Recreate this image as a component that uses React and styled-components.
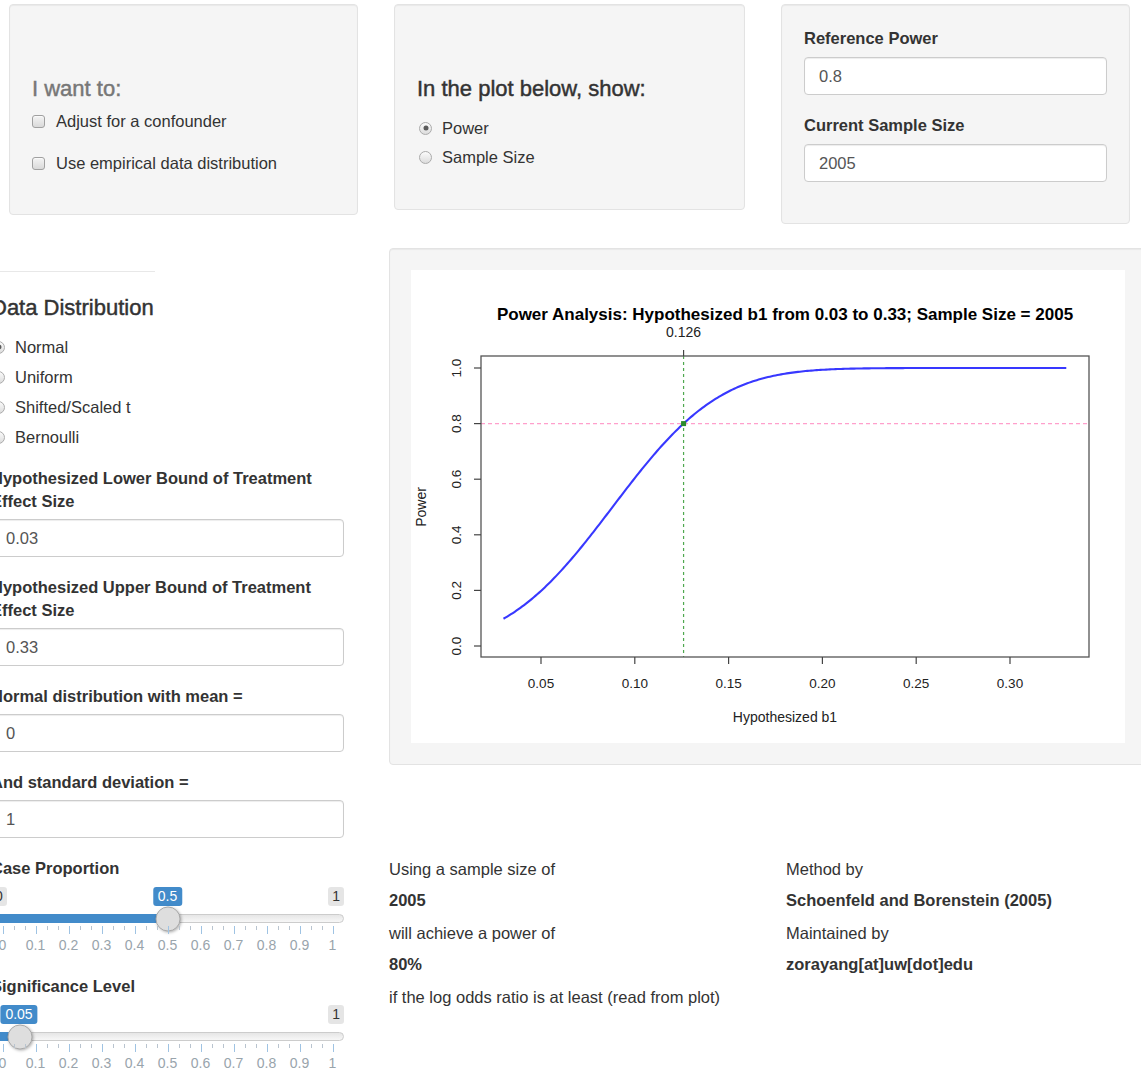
import React from "react";
import styled, { createGlobalStyle } from "styled-components";

const GlobalStyle = createGlobalStyle`
  html, body {
    margin: 0;
    padding: 0;
    background: #fff;
  }
  body {
    font-family: "Liberation Sans", Arial, Helvetica, sans-serif;
    font-size: 16.5px;
    color: #333;
    overflow: hidden;
  }
  * { box-sizing: border-box; }
`;

const Page = styled.div`
  width: 1141px;
  height: 1074px;
  overflow: hidden;
`;

/* ---------- top control wells ---------- */

const TopRow = styled.div`
  display: flex;
  align-items: flex-start;
  gap: 36px;
  padding: 4px 0 0 9px;
`;

const Well = styled.div`
  flex: none;
  width: ${(p) => p.$w}px;
  background: #f5f5f5;
  border: 1px solid #e3e3e3;
  border-radius: 4px;
  box-shadow: inset 0 1px 1px rgba(0, 0, 0, 0.05);
  padding: ${(p) => p.$pad || "22px"};
`;

/* medium-weight section heading */
const Heading = styled.h4`
  margin: ${(p) => p.$mt || 0}px 0 0;
  font-size: 22px;
  line-height: 23px;
  font-weight: 400;
  -webkit-text-stroke: 0.45px currentColor;
  color: ${(p) => (p.$muted ? "#777" : "#333")};
`;

const OptionList = styled.div`
  display: flex;
  flex-direction: column;
  gap: ${(p) => p.$gap}px;
  margin-top: ${(p) => p.$mt || 0}px;
  margin-bottom: ${(p) => p.$mb || 0}px;
`;

const OptionRow = styled.label`
  display: flex;
  align-items: center;
  height: 20px;
  line-height: 20px;
  font-size: 16.5px;
  color: #333;
  padding-left: ${(p) => p.$indent || 0}px;
`;

const CheckMark = styled.span`
  flex: none;
  width: 13px;
  height: 13px;
  border: 1px solid #a0a0a0;
  border-radius: 3px;
  background: linear-gradient(to bottom, #f4f4f4, #d9d9d9);
  box-shadow: inset 0 1px 1px rgba(255, 255, 255, 0.6);
  margin-right: 11px;
`;

const RadioMark = styled.span`
  flex: none;
  position: relative;
  width: 13px;
  height: 13px;
  border: 1px solid #ababab;
  border-radius: 50%;
  background: linear-gradient(to bottom, #fbfbfb, #dcdcdc);
  margin-right: 10px;

  &::after {
    content: "";
    display: ${(p) => (p.$on ? "block" : "none")};
    position: absolute;
    left: 50%;
    top: 50%;
    width: 5px;
    height: 5px;
    border-radius: 50%;
    background: #5a5a5a;
    transform: translate(-50%, -50%);
  }
`;

const FieldLabel = styled.div`
  margin-top: ${(p) => p.$mt || 0}px;
  font-weight: 700;
  font-size: 16.5px;
  line-height: ${(p) => p.$lh || 23}px;
  color: #333;
`;

const TextInput = styled.div`
  margin-top: ${(p) => p.$mt}px;
  margin-bottom: ${(p) => p.$mb || 0}px;
  height: 38px;
  display: flex;
  align-items: center;
  padding: 0 14px;
  background: #fff;
  border: 1px solid #ccc;
  border-radius: 4px;
  box-shadow: inset 0 1px 1px rgba(0, 0, 0, 0.075);
  font-size: 16.5px;
  color: #555;
`;

/* ---------- lower layout ---------- */

const BodyRow = styled.div`
  display: flex;
  align-items: flex-start;
  gap: 45px;
  margin-top: 24px;
`;

const Sidebar = styled.aside`
  flex: none;
  width: 353px;
  margin-left: -9px;
  padding-top: 23px;
`;

const Rule = styled.hr`
  width: 164px;
  margin: 0;
  border: 0;
  border-top: 1px solid #e8e8e8;
`;

const Field = styled.div`
  margin-top: ${(p) => p.$mt || 0}px;
`;

const MainColumn = styled.main`
  flex: none;
  width: 758px;
`;

const PlotWell = styled.div`
  background: #f5f5f5;
  border: 1px solid #e3e3e3;
  border-radius: 4px;
  box-shadow: inset 0 1px 1px rgba(0, 0, 0, 0.05);
  padding: 21px;
`;

const PlotFrame = styled.div`
  width: 714px;
  height: 473px;
  background: #fff;

  svg {
    display: block;
    font-family: "Liberation Sans", Arial, Helvetica, sans-serif;
  }
`;

const InfoGrid = styled.div`
  display: grid;
  grid-template-columns: 397px 1fr;
  margin-top: 94px;
`;

const InfoLine = styled.div`
  font-size: 16.5px;
  line-height: 20px;
  color: #333;
  font-weight: ${(p) => (p.$strong ? 700 : 400)};
  margin-bottom: ${(p) => (p.$strong ? 13 : 11)}px;
`;

/* ---------- range slider ---------- */

const SliderBox = styled.div`
  position: relative;
  height: 66px;
  margin-top: ${(p) => p.$mt}px;
`;

const EdgeRow = styled.div`
  display: flex;
  justify-content: space-between;
  height: 19px;
`;

const EdgeTag = styled.span`
  font-size: 14px;
  line-height: 17px;
  padding: 1px 4px;
  border-radius: 3px;
  background: rgba(0, 0, 0, 0.1);
  color: #333;
  visibility: ${(p) => (p.$hidden ? "hidden" : "visible")};
`;

const ValueTag = styled.span`
  position: absolute;
  top: 0;
  transform: translateX(-50%);
  font-size: 14px;
  line-height: 17px;
  padding: 1px 5px;
  border-radius: 3px;
  background: #428bca;
  color: #fff;
  white-space: nowrap;
`;

const Track = styled.div`
  position: relative;
  margin-top: 8px;
  height: 9px;
  border: 1px solid #ccc;
  border-radius: 16px;
  background: linear-gradient(to bottom, #dedede -50%, #fff 150%);
`;

const TrackFill = styled.div`
  position: absolute;
  left: -1px;
  top: -1px;
  height: 9px;
  background: #428bca;
  border-radius: 16px 0 0 16px;
`;

const Handle = styled.div`
  position: absolute;
  top: 50%;
  width: 25px;
  height: 25px;
  border-radius: 50%;
  transform: translate(-50%, -50%);
  background: #dedede;
  border: 1px solid #aaa;
  box-shadow: 1px 1px 3px rgba(0, 0, 0, 0.3);
`;

const Grid = styled.div`
  position: relative;
  height: 27px;
  margin: 2.5px 11.5px 0;
`;

const Tick = styled.span`
  position: absolute;
  top: 0;
  width: 1px;
  height: ${(p) => (p.$small ? 4 : 8)}px;
  background: ${(p) => (p.$small ? "#b9c4cf" : "#9fc3e3")};
`;

const GridText = styled.span`
  position: absolute;
  top: 11px;
  transform: translateX(-50%);
  font-size: 14px;
  line-height: 16px;
  color: #99a4ac;
`;

const at = (v) => `calc(11.5px + ${v} * (100% - 23px))`;

function RangeSlider({ value, label, mt, hideMin }) {
  const majors = Array.from({ length: 11 }, (_, i) => i / 10);
  const minors = [];
  for (let i = 0; i < 10; i++) {
    minors.push(i / 10 + 1 / 30, i / 10 + 2 / 30);
  }
  return (
    <SliderBox $mt={mt}>
      <EdgeRow>
        <EdgeTag $hidden={hideMin}>0</EdgeTag>
        <EdgeTag>1</EdgeTag>
      </EdgeRow>
      <ValueTag style={{ left: at(value) }}>{label}</ValueTag>
      <Track>
        <TrackFill style={{ width: at(value) }} />
        <Handle style={{ left: at(value) }} />
      </Track>
      <Grid>
        {minors.map((v) => (
          <Tick key={`s${v}`} $small style={{ left: `${v * 100}%` }} />
        ))}
        {majors.map((v) => (
          <Tick key={`m${v}`} style={{ left: `${v * 100}%` }} />
        ))}
        {majors.map((v) => (
          <GridText key={`t${v}`} style={{ left: `${v * 100}%` }}>
            {v === 0 ? "0" : v === 1 ? "1" : v.toFixed(1)}
          </GridText>
        ))}
      </Grid>
    </SliderBox>
  );
}

/* ---------- power curve chart ---------- */

function erf(x) {
  const s = Math.sign(x);
  const a = Math.abs(x);
  const t = 1 / (1 + 0.3275911 * a);
  const y =
    1 -
    ((((1.061405429 * t - 1.453152027) * t + 1.421413741) * t - 0.284496736) * t +
      0.254829592) *
      t *
      Math.exp(-a * a);
  return s * y;
}
const normCdf = (z) => 0.5 * (1 + erf(z / Math.SQRT2));

const xPos = (v) => 130 + (v - 0.05) * 1876;
const yPos = (p) => 376 - p * 278;
const SE = 0.04497;

const curvePoints = Array.from({ length: 301 }, (_, i) => {
  const v = 0.03 + i * 0.001;
  const p = normCdf(v / SE - 1.96);
  return `${xPos(v).toFixed(2)},${yPos(p).toFixed(2)}`;
}).join(" ");

function PowerPlot() {
  const yTicks = [0, 0.2, 0.4, 0.6, 0.8, 1.0];
  const xTicks = [0.05, 0.1, 0.15, 0.2, 0.25, 0.3];
  const cross = xPos(0.126);
  return (
    <svg width="714" height="473" viewBox="0 0 714 473">
      <text x="374" y="50" textAnchor="middle" fontSize="17" fontWeight="700" fill="#000">
        Power Analysis: Hypothesized b1 from 0.03 to 0.33; Sample Size = 2005
      </text>

      {/* reference power line */}
      <line x1="70" y1={yPos(0.8)} x2="678" y2={yPos(0.8)} stroke="#ff9fcc" strokeWidth="1.4" strokeDasharray="4 3" />
      {/* crossing point */}
      <line x1={cross} y1="86" x2={cross} y2="387" stroke="#4fa84f" strokeWidth="1.2" strokeDasharray="3 3" />

      <polyline points={curvePoints} fill="none" stroke="#3838ff" strokeWidth="2.1" />
      <rect x={cross - 2.5} y={yPos(0.8) - 2.5} width="5" height="5" fill="#2b8a2b" />

      <rect x="70" y="86" width="608" height="301" fill="none" stroke="#555" strokeWidth="1.3" />

      {/* top axis marker */}
      <line x1={cross} y1="80" x2={cross} y2="86" stroke="#444" strokeWidth="1.2" />
      <text x={cross} y="67" textAnchor="middle" fontSize="14" fill="#222">0.126</text>

      {yTicks.map((t) => (
        <g key={t}>
          <line x1="63" y1={yPos(t)} x2="70" y2={yPos(t)} stroke="#444" strokeWidth="1.2" />
          <text
            transform={`translate(50 ${yPos(t)}) rotate(-90)`}
            textAnchor="middle"
            fontSize="13.5"
            fill="#222"
          >
            {t.toFixed(1)}
          </text>
        </g>
      ))}

      {xTicks.map((t) => (
        <g key={t}>
          <line x1={xPos(t)} y1="387" x2={xPos(t)} y2="394" stroke="#444" strokeWidth="1.2" />
          <text x={xPos(t)} y="418" textAnchor="middle" fontSize="13.5" fill="#222">
            {t.toFixed(2)}
          </text>
        </g>
      ))}

      <text x="374" y="452" textAnchor="middle" fontSize="14" fill="#222">
        Hypothesized b1
      </text>
      <text transform="translate(15 237) rotate(-90)" textAnchor="middle" fontSize="14" fill="#222">
        Power
      </text>
    </svg>
  );
}

/* ---------- page ---------- */

export default function App() {
  return (
    <Page>
      <GlobalStyle />
      <TopRow>
        <Well $w={349}>
          <Heading $muted $mt={49.5}>I want to:</Heading>
          <OptionList $gap={22} $mt={11.5} $mb={19}>
            <OptionRow>
              <CheckMark />
              Adjust for a confounder
            </OptionRow>
            <OptionRow>
              <CheckMark />
              Use empirical data distribution
            </OptionRow>
          </OptionList>
        </Well>

        <Well $w={351}>
          <Heading $mt={49.5}>In the plot below, show:</Heading>
          <OptionList $gap={9} $mt={18.5} $mb={20}>
            <OptionRow $indent={2}>
              <RadioMark $on />
              Power
            </OptionRow>
            <OptionRow $indent={2}>
              <RadioMark />
              Sample Size
            </OptionRow>
          </OptionList>
        </Well>

        <Well $w={349}>
          <FieldLabel $mt={1} $lh={20}>Reference Power</FieldLabel>
          <TextInput $mt={9}>0.8</TextInput>
          <FieldLabel $mt={20} $lh={20}>Current Sample Size</FieldLabel>
          <TextInput $mt={9} $mb={19}>2005</TextInput>
        </Well>
      </TopRow>

      <BodyRow>
        <Sidebar>
          <Rule />
          <Heading $mt={23.5}>Data Distribution</Heading>
          <OptionList $gap={10} $mt={18.5}>
            <OptionRow $indent={1}>
              <RadioMark $on />
              Normal
            </OptionRow>
            <OptionRow $indent={1}>
              <RadioMark />
              Uniform
            </OptionRow>
            <OptionRow $indent={1}>
              <RadioMark />
              Shifted/Scaled t
            </OptionRow>
            <OptionRow $indent={1}>
              <RadioMark />
              Bernoulli
            </OptionRow>
          </OptionList>

          <Field $mt={19.5}>
            <FieldLabel>Hypothesized Lower Bound of Treatment Effect Size</FieldLabel>
            <TextInput $mt={6.5}>0.03</TextInput>
          </Field>
          <Field $mt={18.5}>
            <FieldLabel>Hypothesized Upper Bound of Treatment Effect Size</FieldLabel>
            <TextInput $mt={6.5}>0.33</TextInput>
          </Field>
          <Field $mt={18.5}>
            <FieldLabel>Normal distribution with mean =</FieldLabel>
            <TextInput $mt={6.5}>0</TextInput>
          </Field>
          <Field $mt={18.5}>
            <FieldLabel>And standard deviation =</FieldLabel>
            <TextInput $mt={6.5}>1</TextInput>
          </Field>

          <Field $mt={18.5}>
            <FieldLabel>Case Proportion</FieldLabel>
            <RangeSlider value={0.5} label="0.5" mt={7.5} />
          </Field>
          <Field $mt={22}>
            <FieldLabel>Significance Level</FieldLabel>
            <RangeSlider value={0.05} label="0.05" mt={7} hideMin />
          </Field>
        </Sidebar>

        <MainColumn>
          <PlotWell>
            <PlotFrame>
              <PowerPlot />
            </PlotFrame>
          </PlotWell>

          <InfoGrid>
            <div>
              <InfoLine>Using a sample size of</InfoLine>
              <InfoLine $strong>2005</InfoLine>
              <InfoLine>will achieve a power of</InfoLine>
              <InfoLine $strong>80%</InfoLine>
              <InfoLine>if the log odds ratio is at least (read from plot)</InfoLine>
            </div>
            <div>
              <InfoLine>Method by</InfoLine>
              <InfoLine $strong>Schoenfeld and Borenstein (2005)</InfoLine>
              <InfoLine>Maintained by</InfoLine>
              <InfoLine $strong>zorayang[at]uw[dot]edu</InfoLine>
            </div>
          </InfoGrid>
        </MainColumn>
      </BodyRow>
    </Page>
  );
}
